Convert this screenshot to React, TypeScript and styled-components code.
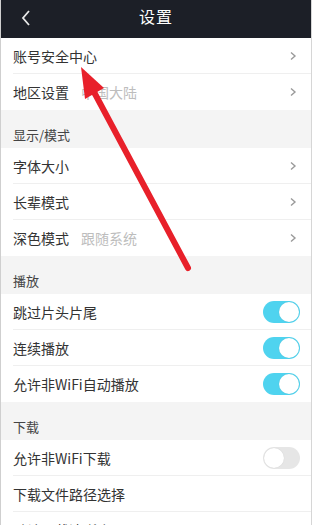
import React from "react";
import styled, { createGlobalStyle } from "styled-components";

const Global = createGlobalStyle`
  html, body { margin: 0; padding: 0; background: #ffffff; }
  body { font-family: "Noto Sans CJK SC", "Noto Sans", sans-serif; }
  * { box-sizing: border-box; }
`;

const Page = styled.div`
  position: relative;
  width: 312px;
  height: 525px;
  overflow: hidden;
  background: #f4f4f4;
  border-left: 1px solid #cfcfcf;
  border-right: 1px solid #d6d6d6;
`;

const Header = styled.div`
  height: 38px;
  background: #1c1f27;
  display: flex;
  align-items: center;
  justify-content: center;
  position: relative;
`;

const Back = styled.div`
  position: absolute;
  left: 18px;
  top: 9px;
  width: 14px;
  height: 18px;
  display: flex;
`;

const Title = styled.div`
  color: #ffffff;
  font-size: 16px;
  letter-spacing: 1px;
  margin-top: -6px;
`;

const Group = styled.div`
  background: #ffffff;
`;

const SectionTitle = styled.div`
  height: 38px;
  display: flex;
  align-items: flex-end;
  padding: 0 12px 4px;
  font-size: 13px;
  color: #444;
  background: #f4f4f4;
`;

const Row = styled.div<{ $last?: boolean }>`
  height: 36px;
  margin-left: 12px;
  padding-right: 10px;
  display: flex;
  align-items: center;
  border-bottom: ${(p) => (p.$last ? "none" : "1px solid #efefef")};
`;

const Label = styled.span`
  font-size: 14px;
  color: #333;
`;

const Sub = styled.span`
  font-size: 14px;
  color: #bdbdbd;
  margin-left: 12px;
`;

const Spacer = styled.div`
  flex: 1;
`;

const Chevron = styled.div`
  width: 8px;
  height: 10px;
  margin-right: 4px;
  display: flex;
`;

const Toggle = styled.div<{ $on?: boolean }>`
  width: 37px;
  height: 22px;
  border-radius: 11px;
  background: ${(p) => (p.$on ? "#4fd3ef" : "#e6e6e6")};
  position: relative;
  margin-right: 1px;
  &::after {
    content: "";
    position: absolute;
    top: 1px;
    ${(p) => (p.$on ? "right: 1px;" : "left: 1px;")}
    width: 20px;
    height: 20px;
    border-radius: 50%;
    background: #ffffff;
    box-shadow: 0 0 1px rgba(0, 0, 0, 0.15);
  }
`;

const Overlay = styled.svg`
  position: absolute;
  left: 0;
  top: 0;
  pointer-events: none;
`;

const Arrow = () => (
  <svg width="8" height="10" viewBox="0 0 8 10">
    <path d="M2 1.5 L6 5 L2 8.5" fill="none" stroke="#9a9a9a" strokeWidth="1.4" />
  </svg>
);

const Nav = () => (
  <Chevron>
    <Arrow />
  </Chevron>
);

export default function App() {
  return (
    <>
      <Global />
      <Page>
        <Header>
          <Back>
            <svg width="14" height="18" viewBox="0 0 14 18">
              <path d="M10 2 L4 9 L10 16" fill="none" stroke="#e8e8e8" strokeWidth="1.8" />
            </svg>
          </Back>
          <Title>设置</Title>
        </Header>
        <Group>
          <Row>
            <Label>账号安全中心</Label>
            <Spacer />
            <Nav />
          </Row>
          <Row $last>
            <Label>地区设置</Label>
            <Sub>中国大陆</Sub>
            <Spacer />
            <Nav />
          </Row>
        </Group>
        <SectionTitle>显示/模式</SectionTitle>
        <Group>
          <Row>
            <Label>字体大小</Label>
            <Spacer />
            <Nav />
          </Row>
          <Row>
            <Label>长辈模式</Label>
            <Spacer />
            <Nav />
          </Row>
          <Row $last>
            <Label>深色模式</Label>
            <Sub>跟随系统</Sub>
            <Spacer />
            <Nav />
          </Row>
        </Group>
        <SectionTitle>播放</SectionTitle>
        <Group>
          <Row>
            <Label>跳过片头片尾</Label>
            <Spacer />
            <Toggle $on />
          </Row>
          <Row>
            <Label>连续播放</Label>
            <Spacer />
            <Toggle $on />
          </Row>
          <Row $last>
            <Label>允许非WiFi自动播放</Label>
            <Spacer />
            <Toggle $on />
          </Row>
        </Group>
        <SectionTitle>下载</SectionTitle>
        <Group>
          <Row>
            <Label>允许非WiFi下载</Label>
            <Spacer />
            <Toggle />
          </Row>
          <Row>
            <Label>下载文件路径选择</Label>
            <Spacer />
          </Row>
          <Row $last>
            <Label>默认下载清晰度</Label>
            <Sub>1080P</Sub>
            <Spacer />
          </Row>
        </Group>
        <Overlay width="312" height="525" viewBox="0 0 312 525">
          <line x1="187" y1="268" x2="93" y2="92" stroke="#e8202a" strokeWidth="6" strokeLinecap="round" />
          <polygon points="80,67 103,88 84,99" fill="#e8202a" />
        </Overlay>
      </Page>
    </>
  );
}
